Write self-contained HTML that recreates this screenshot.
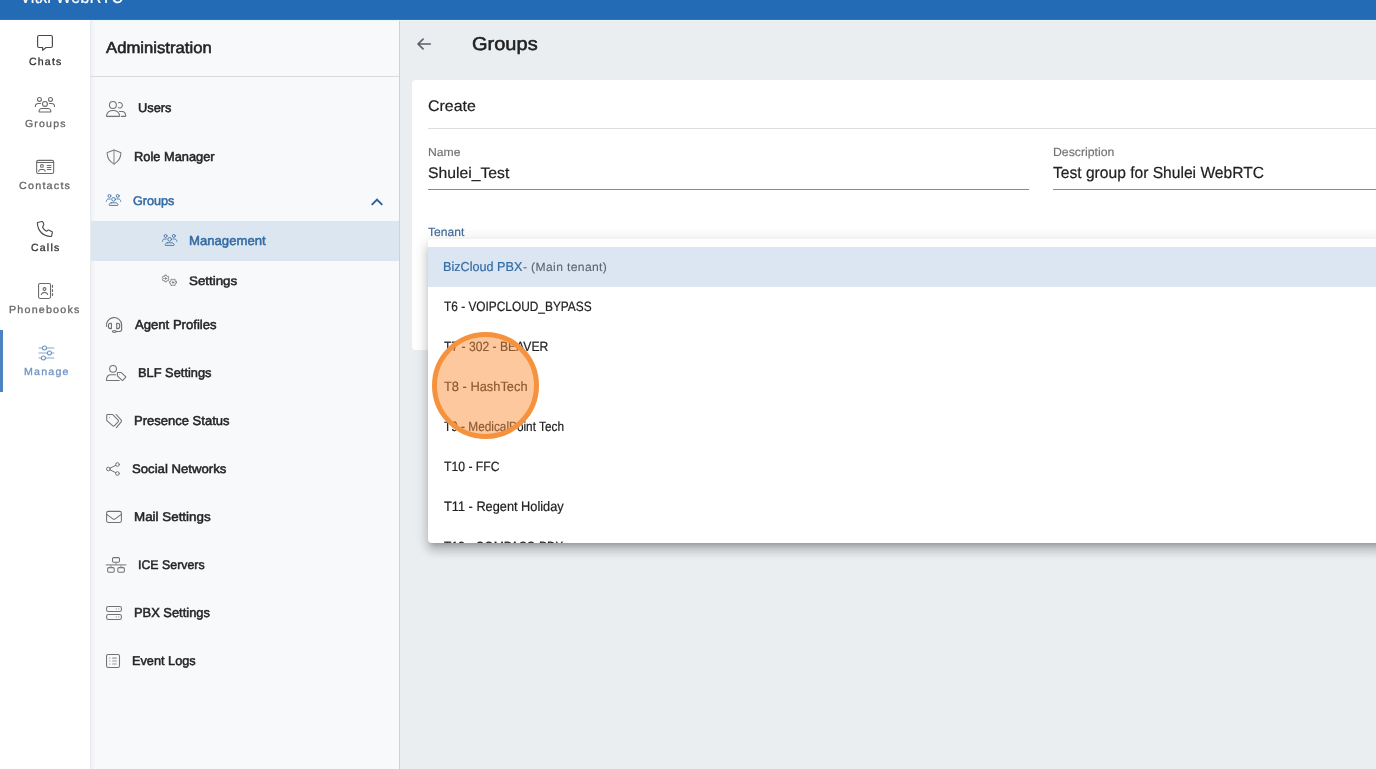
<!DOCTYPE html>
<html lang="en">
<head>
<meta charset="utf-8">
<title>Vitxi WebRTC - Groups</title>
<style>
*{box-sizing:border-box;margin:0;padding:0}
html,body{width:1376px;height:769px;overflow:hidden}
body{font-family:"Liberation Sans",sans-serif;color:#212121;background:#ebeef1;position:relative}
.abs{position:absolute}
.t{position:absolute;white-space:nowrap;line-height:1;transform-origin:0 50%;text-rendering:geometricPrecision}
svg{position:absolute;overflow:visible;fill:none;stroke-linecap:round;stroke-linejoin:round}
#topbar{left:0;top:0;width:1376px;height:19px;background:#236bb4}
#topbar2{left:0;top:19px;width:1376px;height:1px;background:#3a72ac}
#topbar3{left:91px;top:20px;width:1285px;height:1px;background:#e9f6fb}
#rail{left:0;top:20px;width:91px;height:749px;background:#fff;border-right:1px solid #e9ebef}
#adminshade{left:91px;top:20px;width:4px;height:749px;background:linear-gradient(90deg,#eef0f4,#f8f9fb)}
#admin{left:91px;top:20px;width:309px;height:749px;background:#f8f9fb;border-right:1px solid #cfd1d4}
#adminline{left:90px;top:76px;width:309px;height:1px;background:#dadbde}
#activebar{left:0;top:330px;width:3px;height:62px;background:#4b84c0}
#selrow{left:91px;top:221px;width:308px;height:40px;background:#dce6f1}
#card{left:412px;top:80px;width:980px;height:270px;background:#fff;border-radius:4px}
#dd{left:428px;top:239px;width:960px;height:304px;background:#fff;border-radius:4px;box-shadow:0 5px 5px -3px rgba(0,0,0,.2),0 8px 10px 1px rgba(0,0,0,.14),0 3px 14px 2px rgba(0,0,0,.12);overflow:hidden}
#ddsel{left:0;top:8px;width:960px;height:40px;background:#dbe6f2}
#circle{left:432px;top:332px;width:107px;height:107px;border-radius:50%;background:rgba(251,146,60,.5);border:5px solid #f5923e}
</style>
</head>
<body>
<div id="root" style="position:absolute;left:0;top:0;width:1376px;height:769px;will-change:transform">
<div id="topbar" class="abs"></div>
<div id="topbar2" class="abs"></div>
<div id="rail" class="abs"></div>
<div id="activebar" class="abs"></div>
<div id="admin" class="abs"></div>
<div id="adminshade" class="abs"></div>
<div id="adminline" class="abs"></div>
<div id="topbar3" class="abs"></div>
<div id="selrow" class="abs"></div>
<div id="card" class="abs"></div>
<div class="abs" style="left:428px;top:128px;width:960px;height:1px;background:#dddddd"></div>
<div class="abs" style="left:428px;top:189px;width:601px;height:1px;background:#8a8a8a"></div>
<div class="abs" style="left:1053px;top:189px;width:340px;height:1px;background:#8a8a8a"></div>
<div class="t" id="tb" style="left:19.84px;top:-12.50px;color:#ffffff;font-size:19.9px;transform-origin:0 16.00px;transform:scale(0.8336,1.0141);-webkit-text-stroke:0.15px #ffffff">Vitxi WebRTC</div>
<div class="t" id="r1" style="left:28.87px;top:56.60px;color:#333333;font-size:10.6px;transform-origin:0 9.00px;transform:scale(0.9957,0.9842);letter-spacing:1.200px;-webkit-text-stroke:0.3px #333333">Chats</div>
<div class="t" id="r2" style="left:24.64px;top:118.50px;color:#666666;font-size:10.6px;transform-origin:0 9.00px;transform:scale(0.9921,0.9606);letter-spacing:1.200px;-webkit-text-stroke:0.3px #666666">Groups</div>
<div class="t" id="r3" style="left:19.35px;top:180.72px;color:#666666;font-size:10.6px;transform-origin:0 9.00px;transform:scale(1.0153,0.9695);letter-spacing:1.200px;-webkit-text-stroke:0.3px #666666">Contacts</div>
<div class="t" id="r4" style="left:30.87px;top:242.60px;color:#333333;font-size:10.6px;transform-origin:0 9.00px;transform:scale(0.9952,0.9837);letter-spacing:1.200px;-webkit-text-stroke:0.3px #333333">Calls</div>
<div class="t" id="r5" style="left:9.45px;top:304.50px;color:#666666;font-size:10.6px;transform-origin:0 9.00px;transform:scale(1.0085,0.9778);letter-spacing:1.200px;-webkit-text-stroke:0.3px #666666">Phonebooks</div>
<div class="t" id="r6" style="left:24.46px;top:366.57px;color:#6f95c4;font-size:10.6px;transform-origin:0 9.00px;transform:scale(1.0045,0.9712);letter-spacing:1.200px;-webkit-text-stroke:0.3px #6f95c4">Manage</div>
<div class="t" id="a0" style="left:105.87px;top:41.00px;color:#242424;font-size:15.9px;transform-origin:0 13.00px;transform:scale(1.0502,0.9993);-webkit-text-stroke:0.55px #242424">Administration</div>
<div class="t" id="a1" style="left:137.54px;top:102.49px;color:#242424;font-size:12.7px;transform-origin:0 10.00px;transform:scale(1.0110,0.9999);-webkit-text-stroke:0.5px #242424">Users</div>
<div class="t" id="a2" style="left:133.53px;top:150.50px;color:#242424;font-size:12.7px;transform-origin:0 10.00px;transform:scale(1.0114,1.0168);-webkit-text-stroke:0.5px #242424">Role Manager</div>
<div class="t" id="a3" style="left:133.08px;top:194.53px;color:#336ba3;font-size:12.7px;transform-origin:0 10.00px;transform:scale(0.9951,0.9978);-webkit-text-stroke:0.5px #336ba3">Groups</div>
<div class="t" id="a4" style="left:188.71px;top:234.50px;color:#336ba3;font-size:12.7px;transform-origin:0 10.00px;transform:scale(1.0353,1.0187);-webkit-text-stroke:0.5px #336ba3">Management</div>
<div class="t" id="a5" style="left:188.52px;top:274.85px;color:#242424;font-size:12.7px;transform-origin:0 10.00px;transform:scale(1.0514,0.9733);-webkit-text-stroke:0.5px #242424">Settings</div>
<div class="t" id="a6" style="left:134.80px;top:318.50px;color:#242424;font-size:12.7px;transform-origin:0 10.00px;transform:scale(1.0328,1.0181);-webkit-text-stroke:0.5px #242424">Agent Profiles</div>
<div class="t" id="a7" style="left:137.53px;top:366.50px;color:#242424;font-size:12.7px;transform-origin:0 10.00px;transform:scale(1.0118,1.0042);-webkit-text-stroke:0.5px #242424">BLF Settings</div>
<div class="t" id="a8" style="left:133.50px;top:414.50px;color:#242424;font-size:12.7px;transform-origin:0 10.00px;transform:scale(1.0262,1.0168);-webkit-text-stroke:0.5px #242424">Presence Status</div>
<div class="t" id="a9" style="left:131.55px;top:462.86px;color:#242424;font-size:12.7px;transform-origin:0 10.00px;transform:scale(1.0379,0.9758);-webkit-text-stroke:0.5px #242424">Social Networks</div>
<div class="t" id="a10" style="left:134.15px;top:510.50px;color:#242424;font-size:12.7px;transform-origin:0 10.00px;transform:scale(1.0551,0.9956);-webkit-text-stroke:0.5px #242424">Mail Settings</div>
<div class="t" id="a11" style="left:138.17px;top:558.50px;color:#242424;font-size:12.7px;transform-origin:0 10.00px;transform:scale(0.9736,0.9887);-webkit-text-stroke:0.5px #242424">ICE Servers</div>
<div class="t" id="a12" style="left:133.52px;top:606.50px;color:#242424;font-size:12.7px;transform-origin:0 10.00px;transform:scale(1.0155,1.0168);-webkit-text-stroke:0.5px #242424">PBX Settings</div>
<div class="t" id="a13" style="left:131.55px;top:654.50px;color:#242424;font-size:12.7px;transform-origin:0 10.00px;transform:scale(1.0031,1.0038);-webkit-text-stroke:0.5px #242424">Event Logs</div>
<div class="t" id="m0" style="left:472.25px;top:35.19px;color:#212121;font-size:19.0px;transform-origin:0 16.00px;transform:scale(1.0534,0.9775);-webkit-text-stroke:0.55px #212121">Groups</div>
<div class="t" id="m1" style="left:427.75px;top:98.59px;color:#212121;font-size:15.7px;transform-origin:0 13.00px;transform:scale(1.0157,0.9714);-webkit-text-stroke:0.2px #212121">Create</div>
<div class="t" id="m2" style="left:427.86px;top:147.01px;color:#727272;font-size:11.9px;transform-origin:0 9.00px;transform:scale(1.0225,0.9822);-webkit-text-stroke:0.15px #727272">Name</div>
<div class="t" id="m3" style="left:427.57px;top:165.56px;color:#212121;font-size:15.7px;transform-origin:0 13.00px;transform:scale(1.0026,0.9737);-webkit-text-stroke:0.2px #212121">Shulei_Test</div>
<div class="t" id="m4" style="left:1052.53px;top:147.00px;color:#727272;font-size:11.9px;transform-origin:0 9.00px;transform:scale(1.0315,1.0076);-webkit-text-stroke:0.15px #727272">Description</div>
<div class="t" id="m5" style="left:1053.27px;top:165.68px;color:#212121;font-size:15.7px;transform-origin:0 13.00px;transform:scale(0.9942,1.0266);-webkit-text-stroke:0.2px #212121">Test group for Shulei WebRTC</div>
<div class="t" id="m6" style="left:427.81px;top:226.89px;color:#3f6a97;font-size:11.9px;transform-origin:0 9.00px;transform:scale(1.0153,1.0026);-webkit-text-stroke:0.15px #3f6a97">Tenant</div>
<svg width="1376" height="769" viewBox="0 0 1376 769" style="left:0;top:0">
<!-- rail: chats -->
<g stroke="#484848" stroke-width="1.15">
<path d="M39.1 35.5H50.9a1.5 1.5 0 0 1 1.5 1.5V46a1.5 1.5 0 0 1-1.5 1.5H46.1L42.6 50.2V47.5H39.1a1.5 1.5 0 0 1-1.5-1.5V37a1.5 1.5 0 0 1 1.5-1.5Z"/>
</g>
<!-- rail: groups -->
<g stroke="#6a6a6a" stroke-width="1.1" transform="translate(34.95 97)">
<circle cx="4.5" cy="2.4" r="1.95"/><circle cx="15.5" cy="2.4" r="1.95"/><circle cx="10" cy="6.9" r="2.45"/>
<path d="M0.4 9.6C0.4 7.8 1.7 6.45 3.4 6.45H5.6M14.4 6.45H16.6C18.3 6.45 19.6 7.8 19.6 9.6"/>
<path d="M6.9 11.5H13.1C14.9 11.5 15.95 13.2 15.95 14.4C15.95 14.8 15.7 15 15.4 15H4.6C4.3 15 4.05 14.8 4.05 14.4C4.05 13.2 5.1 11.5 6.9 11.5Z"/>
</g>
<!-- rail: contacts -->
<g stroke="#6a6a6a" stroke-width="1.1">
<rect x="36.65" y="160.4" width="17" height="13.1" rx="1.6"/>
<path d="M36.65 162.5H53.65"/>
<circle cx="41.9" cy="165.9" r="1.4"/>
<path d="M38.7 171.3C38.9 170.1 39.7 169.45 40.6 169.45H43.3C44.2 169.45 45 170.1 45.2 171.3"/>
<path d="M47.2 165.45H51M47.2 167.5H51M47.2 169.5H51" stroke-width="1"/>
</g>
<!-- rail: calls -->
<g stroke="#484848" stroke-width="1.1">
<path d="M37.7 222.5L41.9 221.55Q42.6 221.4 42.85 222L43.75 224.3Q43.95 224.85 43.5 225.3L42.55 227.25Q43.9 230 46.55 231.3L47.8 230.2Q48.25 229.85 48.75 230.1L52.1 231.7Q52.55 231.95 52.4 232.45L51.55 236.1Q51.4 236.6 50.85 236.55Q38.3 235.3 37.35 223.1Q37.3 222.65 37.7 222.5Z"/>
</g>
<!-- rail: phonebooks -->
<g stroke="#6a6a6a" stroke-width="1.1">
<rect x="38.55" y="283.45" width="12" height="15" rx="1.6"/>
<path d="M52.5 285.4V287.3M52.5 289.6V291.4M52.5 293.5V295.4"/>
<circle cx="44.5" cy="289" r="1.4"/>
<path d="M41.3 294.5C41.7 293.1 42.9 292.4 44.5 292.4C46.1 292.4 47.3 293.1 47.7 294.5"/>
</g>
<!-- rail: manage -->
<g stroke="#6c92c2" stroke-width="1.05">
<path d="M38.9 347.9H42.3M46.6 347.9H53.9M38.9 352.9H47.3M51.6 352.9H53.9M38.9 357.9H41.3M45.5 357.9H53.9" stroke="#8aa6cb"/>
<circle cx="44.45" cy="347.9" r="2"/><circle cx="49.45" cy="352.9" r="2"/><circle cx="43.4" cy="357.9" r="2"/>
</g>
<!-- admin: users -->
<g stroke="#727272" stroke-width="1.05">
<circle cx="112.9" cy="105" r="3.45"/>
<path d="M118.6 102.8A2.7 2.7 0 1 1 118.3 107.6"/>
<path d="M107 116.35C106.6 116.35 106.4 116.1 106.45 115.7C106.9 112.7 109.6 110.45 113.05 110.45C116.5 110.45 119.2 112.7 119.65 115.7C119.7 116.1 119.5 116.35 119.1 116.35Z"/>
<path d="M119.4 111.4H122C124 111.4 125.6 113.2 125.8 115.7C125.85 116.1 125.6 116.35 125.2 116.35H121.4"/>
</g>
<!-- admin: shield -->
<g stroke="#787878" stroke-width="1.05">
<path d="M114 149.9L107.5 152.4Q107.1 152.6 107.1 153.1Q107.3 160.5 114 164Q120.7 160.5 120.9 153.1Q120.9 152.6 120.5 152.4Z"/>
<path d="M114 150V164" stroke="#8a8a8a"/>
</g>
<!-- admin: groups small -->
<g stroke="#4f76a3" stroke-width="1.25" transform="translate(106.05 194.15) scale(.75)">
<circle cx="4.5" cy="2.4" r="1.95"/><circle cx="15.5" cy="2.4" r="1.95"/><circle cx="10" cy="6.9" r="2.45"/>
<path d="M0.4 9.6C0.4 7.8 1.7 6.45 3.4 6.45H5.6M14.4 6.45H16.6C18.3 6.45 19.6 7.8 19.6 9.6"/>
<path d="M6.9 11.5H13.1C14.9 11.5 15.95 13.2 15.95 14.4C15.95 14.8 15.7 15 15.4 15H4.6C4.3 15 4.05 14.8 4.05 14.4C4.05 13.2 5.1 11.5 6.9 11.5Z"/>
</g>
<path d="M377 198.15l-6 6 1.41 1.41L377 200.98l4.59 4.58L383 204.15z" fill="#2f6398" stroke="none"/>
<!-- admin: management -->
<g stroke="#4f76a3" stroke-width="1.25" transform="translate(162.15 234.15) scale(.75)">
<circle cx="4.5" cy="2.4" r="1.95"/><circle cx="15.5" cy="2.4" r="1.95"/><circle cx="10" cy="6.9" r="2.45"/>
<path d="M0.4 9.6C0.4 7.8 1.7 6.45 3.4 6.45H5.6M14.4 6.45H16.6C18.3 6.45 19.6 7.8 19.6 9.6"/>
<path d="M6.9 11.5H13.1C14.9 11.5 15.95 13.2 15.95 14.4C15.95 14.8 15.7 15 15.4 15H4.6C4.3 15 4.05 14.8 4.05 14.4C4.05 13.2 5.1 11.5 6.9 11.5Z"/>
</g>
<!-- admin: settings cogs -->
<g stroke="#808080" stroke-width=".95">
<path d="M164.93 275.13L166.37 275.13L166.45 276.03L167.39 276.57L168.21 276.19L168.93 277.43L168.19 277.96L168.19 279.04L168.93 279.57L168.21 280.81L167.39 280.43L166.45 280.97L166.37 281.87L164.93 281.87L164.85 280.97L163.91 280.43L163.09 280.81L162.37 279.57L163.11 279.04L163.11 277.96L162.37 277.43L163.09 276.19L163.91 276.57L164.85 276.03Z"/>
<circle cx="165.65" cy="278.5" r=".75" fill="#808080"/>
<path d="M176.47 281.66L176.47 283.14L175.57 283.23L175.01 284.21L175.38 285.04L174.10 285.78L173.56 285.04L172.44 285.04L171.90 285.78L170.62 285.04L170.99 284.21L170.43 283.23L169.53 283.14L169.53 281.66L170.43 281.57L170.99 280.59L170.62 279.76L171.90 279.02L172.44 279.76L173.56 279.76L174.10 279.02L175.38 279.76L175.01 280.59L175.57 281.57Z"/>
<circle cx="173" cy="282.4" r=".75" fill="#808080"/>
</g>
<!-- admin: headset -->
<g stroke="#6e6e6e" stroke-width="1.1">
<path d="M106.45 326.4A7.65 7.65 0 1 1 121.65 324.85V329.3Q121.65 331.45 119.5 331.45H116.5"/>
<path d="M111.4 323.2V328.6H110.6C109.2 328.6 108.3 327.4 108.3 325.9C108.3 324.4 109.2 323.2 110.6 323.2Z"/>
<path d="M116.7 323.2V328.6H117.5C118.9 328.6 119.8 327.4 119.8 325.9C119.8 324.4 118.9 323.2 117.5 323.2Z"/>
<ellipse cx="114.4" cy="331.5" rx="2" ry=".95"/>
</g>
<!-- admin: BLF user tag -->
<g stroke="#727272" stroke-width="1.05">
<circle cx="113.05" cy="368.8" r="3.4"/>
<path d="M115.6 374.8H111C108.6 374.8 106.7 376.8 106.4 379.8Q106.35 380.5 107 380.5H119.2"/>
<path d="M117.9 372.55L121 372.4L125.6 376.7Q125.9 377 125.6 377.3L122.7 380.4Q122.4 380.7 122.1 380.4L117.4 375.9V373.05Q117.4 372.6 117.9 372.55Z"/>
<circle cx="119.4" cy="374.4" r=".45" fill="#8a8a8a" stroke="none"/>
</g>
<!-- admin: tags -->
<g stroke="#727272" stroke-width="1.05">
<path d="M107.6 414.5H112.4Q112.8 414.5 113.1 414.8L118.3 420.3Q118.9 421 118.3 421.7L114.3 425.8Q113.6 426.4 112.9 425.8L107.1 420.9Q106.75 420.6 106.75 420.2V415.35Q106.75 414.5 107.6 414.5Z"/>
<path d="M116.2 414.5L121.2 420.1Q121.9 421 121.2 421.9L116.4 427.6"/>
<circle cx="109.5" cy="417.25" r=".5" fill="#8a8a8a" stroke="none"/>
</g>
<!-- admin: share -->
<g stroke="#727272" stroke-width="1">
<circle cx="108.4" cy="469" r="1.85"/><circle cx="117.45" cy="464.5" r="1.85"/><circle cx="117.45" cy="473.55" r="1.85"/>
<path d="M110.1 468.15L115.75 465.35M110.1 469.85L115.75 472.7"/>
</g>
<!-- admin: mail -->
<g stroke="#727272" stroke-width="1.05">
<rect x="106.6" y="511.35" width="14.8" height="11.05" rx="1.6"/>
<path d="M106.7 514.4L113.2 519.1Q114 519.6 114.8 519.1L121.3 514.4"/>
</g>
<!-- admin: network -->
<g stroke="#727272" stroke-width="1.05">
<rect x="112.5" y="557.6" width="7" height="4.7" rx="1.2"/>
<rect x="107.65" y="567.6" width="6.55" height="4.7" rx="1.2"/>
<rect x="117.8" y="567.6" width="6.55" height="4.7" rx="1.2"/>
<path d="M106.3 564.95H125.8" stroke="#8f8f8f" stroke-width="1.3"/>
<path d="M116 562.5V564.5M110.9 565.4V567.4M121.05 565.4V567.4" stroke="#8f8f8f"/>
</g>
<!-- admin: server -->
<g stroke="#727272" stroke-width="1.05">
<rect x="106.6" y="606.4" width="14.8" height="5" rx="1.7"/>
<rect x="106.6" y="614.5" width="14.8" height="5" rx="1.7"/>
<g fill="#9a9a9a" stroke="none"><circle cx="116.2" cy="608.95" r=".6"/><circle cx="118.7" cy="608.95" r=".6"/><circle cx="116.2" cy="616.95" r=".6"/><circle cx="118.7" cy="616.95" r=".6"/></g>
</g>
<!-- admin: event logs -->
<g stroke="#727272" stroke-width="1.05">
<rect x="106.55" y="654.4" width="12.95" height="13.1" rx="1.7"/>
<path d="M112.2 658.05H116.7M112.2 661H116.7M112.2 664H116.7" stroke="#9a9a9a" stroke-width="1.2" stroke-linecap="butt"/>
<path d="M109.2 658.05H110.3M109.2 661H110.3M109.2 664H110.3" stroke="#9a9a9a" stroke-width="1.2" stroke-linecap="butt"/>
</g>
<!-- back arrow -->
<path d="M430.3 44H418M423.1 39.1L418 44L423.1 48.9" stroke="#5a6065" stroke-width="1.65"/>
</svg>

<div id="dd" class="abs">
<div id="ddsel" class="abs"></div>
<div class="t" id="d0a" style="left:15.25px;top:20.50px;color:#336ba3;font-size:13.1px;transform-origin:0 11.00px;transform:scale(0.9648,0.9926);-webkit-text-stroke:0.2px #336ba3">BizCloud PBX</div>
<div class="t" id="d0b" style="left:95.15px;top:22.90px;color:#5d6670;font-size:11.9px;transform-origin:0 9.00px;transform:scale(1.0203,1.0000);letter-spacing:0.350px;-webkit-text-stroke:0.12px #5d6670">- (Main tenant)</div>
<div class="t" id="d1" style="left:15.98px;top:60.80px;color:#212121;font-size:13.1px;transform-origin:0 11.00px;transform:scale(0.9070,1.0317);-webkit-text-stroke:0.2px #212121">T6 - VOIPCLOUD_BYPASS</div>
<div class="t" id="d2" style="left:15.98px;top:101.03px;color:#212121;font-size:13.1px;transform-origin:0 11.00px;transform:scale(0.9264,1.0220);-webkit-text-stroke:0.2px #212121">T7 - 302 - BEAVER</div>
<div class="t" id="d3" style="left:15.82px;top:141.35px;color:#212121;font-size:13.1px;transform-origin:0 11.00px;transform:scale(0.9814,1.0293);-webkit-text-stroke:0.2px #212121">T8 - HashTech</div>
<div class="t" id="d4" style="left:15.98px;top:180.76px;color:#212121;font-size:13.1px;transform-origin:0 11.00px;transform:scale(0.9024,1.0296);-webkit-text-stroke:0.2px #212121">T9 - MedicalPoint Tech</div>
<div class="t" id="d5" style="left:15.98px;top:221.05px;color:#212121;font-size:13.1px;transform-origin:0 11.00px;transform:scale(0.9316,1.0228);-webkit-text-stroke:0.2px #212121">T10 - FFC</div>
<div class="t" id="d6" style="left:15.89px;top:261.28px;color:#212121;font-size:13.1px;transform-origin:0 11.00px;transform:scale(0.9752,1.0433);-webkit-text-stroke:0.2px #212121">T11 - Regent Holiday</div>
<div class="t" id="d7" style="left:16.12px;top:300.99px;color:#212121;font-size:13.1px;transform-origin:0 11.00px;transform:scale(0.9223,1.0189);-webkit-text-stroke:0.2px #212121">T12 - COMPASS-PBX</div>
</div>
<div id="circle" class="abs"></div>
</div>
</body>
</html>
